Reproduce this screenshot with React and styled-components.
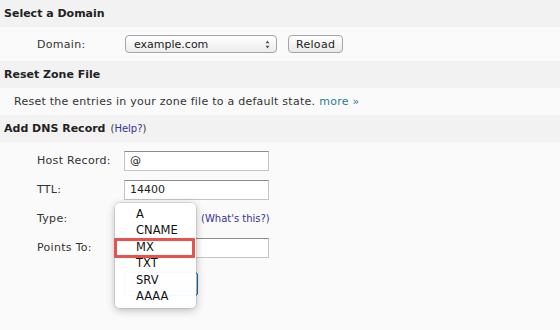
import styled, { createGlobalStyle } from 'styled-components';

const Global = createGlobalStyle`
  html, body {
    margin: 0;
    padding: 0;
    background: #fafafa;
  }
  body {
    font-family: "DejaVu Sans", Verdana, sans-serif;
    font-size: 11px;
    color: #333;
  }
`;

const Page = styled.div`
  width: 560px;
  height: 330px;
  background: #fafafa;
  overflow: hidden;
`;

const Header = styled.div`
  height: 27px;
  display: flex;
  align-items: center;
  padding-left: 4px;
  background: #f2f2f2;
  font-size: 11px;
  font-weight: bold;
  color: #222;
  gap: 5px;
`;

const Small = styled.a`
  font-size: 10px;
  font-weight: normal;
  color: #33339a;
  text-decoration: none;

  span {
    color: #333;
  }
`;

const Row = styled.div`
  height: ${(p) => p.h || 34}px;
  display: flex;
  align-items: center;
  padding-left: ${(p) => p.pad || 37}px;
`;

const Label = styled.div`
  width: 87px;
  flex-shrink: 0;
  font-size: 11px;
  letter-spacing: 0.3px;
  color: #333;
`;

const Select = styled.div`
  box-sizing: border-box;
  width: 152px;
  height: 18px;
  margin-left: 1px;
  display: flex;
  align-items: center;
  justify-content: space-between;
  padding: 0 6px 0 8px;
  border: 1px solid #a5a5a5;
  border-radius: 4px;
  background: linear-gradient(#ffffff, #ececec);
  font-size: 11px;
  color: #222;
`;

const Arrows = styled.svg`
  width: 5px;
  height: 9px;
`;

const Button = styled.div`
  box-sizing: border-box;
  height: 18px;
  margin-left: 11px;
  padding: 0 7px;
  display: flex;
  align-items: center;
  border: 1px solid #a5a5a5;
  border-radius: 4px;
  background: linear-gradient(#ffffff, #e9e9e9);
  font-size: 11px;
  letter-spacing: 0.3px;
  color: #222;
`;

const Text = styled.div`
  height: 27px;
  display: flex;
  align-items: center;
  padding-left: 14px;
  font-size: 11px;
  letter-spacing: 0.25px;
  color: #333;
`;

const More = styled.a`
  color: #2a7a96;
  text-decoration: none;
  margin-left: 4px;
`;

const Form = styled.div`
  position: relative;
  padding-top: 4px;
`;

const FieldRow = styled.div`
  height: 29px;
  display: flex;
  align-items: center;
  padding-left: 37px;
`;

const Input = styled.div`
  box-sizing: border-box;
  width: 145px;
  height: 20px;
  display: flex;
  align-items: center;
  padding-left: 5px;
  border: 1px solid #c4c4c4;
  border-top-color: #8c8c8c;
  background: #fff;
  font-size: 11px;
  color: #222;
`;

const TypeSlot = styled.div`
  width: 72px;
  height: 18px;
`;

const Help = styled.a`
  margin-left: 5px;
  font-size: 10px;
  color: #33339a;
  text-decoration: none;
`;

const SubmitRow = styled.div`
  height: 44px;
  display: flex;
  align-items: center;
  padding-left: 124px;
`;

const Submit = styled.div`
  box-sizing: border-box;
  width: 74px;
  height: 24px;
  border: 1px solid #1d5fa0;
  border-radius: 3px;
  background: linear-gradient(#dbe9f6, #bcd3ea);
`;

const Menu = styled.div`
  position: absolute;
  left: 115px;
  top: 61px;
  width: 81px;
  height: 105px;
  box-sizing: border-box;
  padding-top: 3px;
  background: rgba(255, 255, 255, 0.97);
  border-radius: 5px;
  box-shadow: 0 2px 8px rgba(0, 0, 0, 0.28), 0 0 0 1px rgba(0, 0, 0, 0.08);
`;

const Item = styled.div`
  height: 16.4px;
  line-height: 16.4px;
  padding-left: 21px;
  font-family: "DejaVu Sans", sans-serif;
  font-size: 11.5px;
  color: #111;
  position: relative;
`;

const Highlight = styled.div`
  position: absolute;
  left: -1px;
  top: -1px;
  width: 81px;
  height: 20px;
  box-sizing: border-box;
  border: 3px solid #e8524a;
  border-radius: 1px;
`;

const types = ['A', 'CNAME', 'MX', 'TXT', 'SRV', 'AAAA'];

export default function App() {
  return (
    <Page>
      <Global />
      <Header>Select a Domain</Header>
      <Row>
        <Label>Domain:</Label>
        <Select>
          example.com
          <Arrows viewBox="0 0 5 9">
            <path d="M2.5 0.5 L4.5 3.2 L0.5 3.2 Z M2.5 8.5 L4.5 5.8 L0.5 5.8 Z" fill="#555" />
          </Arrows>
        </Select>
        <Button>Reload</Button>
      </Row>
      <Header>Reset Zone File</Header>
      <Text>
        Reset the entries in your zone file to a default state.
        <More href="#">more »</More>
      </Text>
      <Header>
        Add DNS Record
        <Small href="#">
          <span>(</span>Help?<span>)</span>
        </Small>
      </Header>
      <Form>
        <FieldRow>
          <Label>Host Record:</Label>
          <Input>@</Input>
        </FieldRow>
        <FieldRow>
          <Label>TTL:</Label>
          <Input>14400</Input>
        </FieldRow>
        <FieldRow>
          <Label>Type:</Label>
          <TypeSlot />
          <Help href="#">(What's this?)</Help>
        </FieldRow>
        <FieldRow>
          <Label>Points To:</Label>
          <Input />
        </FieldRow>
        <SubmitRow>
          <Submit />
        </SubmitRow>
        <Menu>
          {types.map((t) => (
            <Item key={t}>
              {t === 'MX' && <Highlight />}
              {t}
            </Item>
          ))}
        </Menu>
      </Form>
    </Page>
  );
}
